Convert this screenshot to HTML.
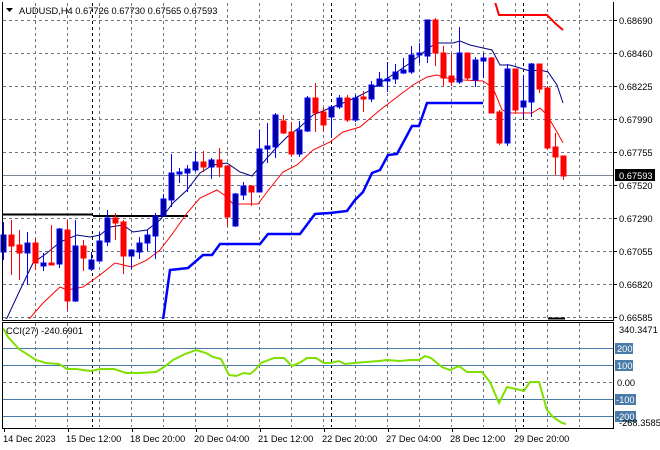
<!DOCTYPE html>
<html><head><meta charset="utf-8"><style>
html,body{margin:0;padding:0;background:#fff;}
svg{display:block;font-family:"Liberation Sans",sans-serif;}
</style></head><body>
<svg width="660" height="450" viewBox="0 0 660 450" xmlns="http://www.w3.org/2000/svg">
<defs><clipPath id="m"><rect x="3" y="3" width="610" height="316"/></clipPath>
<clipPath id="c"><rect x="3" y="323" width="610" height="104"/></clipPath></defs>
<rect width="660" height="450" fill="#fff"/>
<!-- grid main -->
<g stroke="#6b7683" stroke-width="1" stroke-dasharray="3,3" fill="none">
<path d="M3 20.5H613M3 53.5H613M3 86.5H613M3 119.5H613M3 152.5H613M3 185.5H613M3 218.5H613M3 251.5H613M3 284.5H613M3 317.5H613"/>
<path d="M35.5 3V319M67.5 3V319M99.5 3V319M131.5 3V319M163.5 3V319M195.5 3V319M227.5 3V319M259.5 3V319M291.5 3V319M323.5 3V319M355.5 3V319M387.5 3V319M419.5 3V319M451.5 3V319M483.5 3V319M515.5 3V319M547.5 3V319M579.5 3V319"/>
<path d="M35.5 323V427M67.5 323V427M99.5 323V427M131.5 323V427M163.5 323V427M195.5 323V427M227.5 323V427M259.5 323V427M291.5 323V427M323.5 323V427M355.5 323V427M387.5 323V427M419.5 323V427M451.5 323V427M483.5 323V427M515.5 323V427M547.5 323V427M579.5 323V427"/>
<path d="M3 382.5H613"/>
</g>
<g stroke="#000" stroke-dasharray="3,3"><path d="M92.5 3V319M331.5 3V319M523.5 3V319M92.5 323V427M331.5 323V427M523.5 323V427"/></g>
<!-- current price line -->
<path d="M3 175.5H613" stroke="#7a8694"/>
<g clip-path="url(#m)" fill="none">
<!-- black thick -->
<path d="M3 214.5H93M93 216H188" stroke="#000" stroke-width="2"/>
<!-- blue thick -->
<polyline stroke="#0000ff" stroke-width="2.5" points="163,320 170,270 188,268 203,255 212,255 220,244 260,244 268,234 300,234 315,214 330,213 347,211 355,200 363,192 372,173 380,170 388,155 397,154 412,126 419,126 427,103 483,103"/>
<!-- red thick top -->
<polyline stroke="#ff0000" stroke-width="2" points="495,2 499,15 547,15 556,24 563,30"/>
<!-- navy MA -->
<polyline stroke="#000080" stroke-width="1" points="5,320 7,318 20,290 33,263 47,253 60,242 77,235 90,237 100,235 110,227 123,225 133,232 147,230 160,220 173,203 187,190 200,173 213,165 227,163 240,172 252,176 267,158 277,147 287,137 300,127 313,115 330,108 343,103 357,97 367,92 380,83 397,72 410,63 420,55 430,47 437,43 453,43 460,41 470,45 483,48 492,50 500,65 510,65 520,68 530,71 540,70 548,72 557,85 563,103"/>
<!-- red MA -->
<polyline stroke="#ff0000" stroke-width="1" points="28,320 30,318 43,303 60,287 67,290 83,287 100,275 115,263 132,267 147,260 160,250 173,233 187,213 200,198 217,190 227,197 233,204 258,204 267,192 283,172 297,165 313,150 330,142 343,132 360,127 380,110 397,97 413,85 427,77 437,75 447,78 463,80 483,81 493,88 502,110 510,113 532,113 540,108 547,115 557,132 563,143"/>
</g>
<!-- candles -->
<g id="cd" stroke-width="1">
<g stroke="#0000ff" fill="#00009a">
<line x1="3.5" y1="222" x2="3.5" y2="260"/><rect x="1" y="235" width="5" height="17"/>
<line x1="27.5" y1="232" x2="27.5" y2="285"/><rect x="25" y="243" width="5" height="10"/>
<line x1="43.5" y1="253" x2="43.5" y2="271"/><rect x="41" y="263" width="5" height="3"/>
<line x1="59.5" y1="228" x2="59.5" y2="268"/><rect x="57" y="229" width="5" height="35"/>
<line x1="75.5" y1="220" x2="75.5" y2="302"/><rect x="73" y="246" width="5" height="55"/>
<line x1="91.5" y1="252" x2="91.5" y2="271"/><rect x="89" y="260" width="5" height="9"/>
<line x1="99.5" y1="232" x2="99.5" y2="261"/><rect x="97" y="241" width="5" height="20"/>
<line x1="107.5" y1="210" x2="107.5" y2="246"/><rect x="105" y="218" width="5" height="24"/>
<line x1="131.5" y1="250" x2="131.5" y2="269"/><rect x="129" y="250" width="5" height="6"/>
<line x1="139.5" y1="237" x2="139.5" y2="259"/><rect x="137" y="243" width="5" height="9"/>
<line x1="147.5" y1="229" x2="147.5" y2="251"/><rect x="145" y="235" width="5" height="8"/>
<line x1="155.5" y1="213" x2="155.5" y2="259"/><rect x="153" y="216" width="5" height="20"/>
<line x1="163.5" y1="194" x2="163.5" y2="216"/><rect x="161" y="199" width="5" height="17"/>
<line x1="171.5" y1="154" x2="171.5" y2="207"/><rect x="169" y="173" width="5" height="27"/>
<line x1="179.5" y1="168" x2="179.5" y2="183"/><rect x="177" y="172" width="5" height="2"/>
<line x1="187.5" y1="165" x2="187.5" y2="192"/><rect x="185" y="169" width="5" height="4"/>
<line x1="195.5" y1="151" x2="195.5" y2="172"/><rect x="193" y="162" width="5" height="8"/>
<line x1="211.5" y1="158" x2="211.5" y2="179"/><rect x="209" y="160" width="5" height="7"/>
<line x1="235.5" y1="193" x2="235.5" y2="227"/><rect x="233" y="194" width="5" height="32"/>
<line x1="243.5" y1="182" x2="243.5" y2="200"/><rect x="241" y="186" width="5" height="9"/>
<line x1="259.5" y1="130" x2="259.5" y2="192"/><rect x="257" y="149" width="5" height="43"/>
<line x1="267.5" y1="123" x2="267.5" y2="163"/><rect x="265" y="146" width="5" height="3"/>
<line x1="275.5" y1="113" x2="275.5" y2="158"/><rect x="273" y="115" width="5" height="32"/>
<line x1="299.5" y1="121" x2="299.5" y2="157"/><rect x="297" y="130" width="5" height="24"/>
<line x1="307.5" y1="96" x2="307.5" y2="132"/><rect x="305" y="98" width="5" height="33"/>
<line x1="331.5" y1="105" x2="331.5" y2="138"/><rect x="329" y="107" width="5" height="10"/>
<line x1="339.5" y1="95" x2="339.5" y2="109"/><rect x="337" y="98" width="5" height="9"/>
<line x1="355.5" y1="95" x2="355.5" y2="122"/><rect x="353" y="98" width="5" height="22"/>
<line x1="371.5" y1="81" x2="371.5" y2="102"/><rect x="369" y="85" width="5" height="14"/>
<line x1="379.5" y1="72" x2="379.5" y2="87"/><rect x="377" y="79" width="5" height="7"/>
<line x1="387.5" y1="62" x2="387.5" y2="92"/><rect x="385" y="79" width="5" height="2"/>
<line x1="395.5" y1="64" x2="395.5" y2="84"/><rect x="393" y="72" width="5" height="7"/>
<line x1="403.5" y1="58" x2="403.5" y2="74"/><rect x="401" y="70" width="5" height="3"/>
<line x1="411.5" y1="46" x2="411.5" y2="74"/><rect x="409" y="55" width="5" height="17"/>
<line x1="419.5" y1="43" x2="419.5" y2="63"/><rect x="417" y="53" width="5" height="2"/>
<line x1="427.5" y1="20" x2="427.5" y2="63"/><rect x="425" y="20" width="5" height="36"/>
<line x1="459.5" y1="27" x2="459.5" y2="84"/><rect x="457" y="53" width="5" height="29"/>
<line x1="475.5" y1="57" x2="475.5" y2="87"/><rect x="473" y="60" width="5" height="20"/>
<line x1="483.5" y1="53" x2="483.5" y2="78"/><rect x="481" y="58" width="5" height="3"/>
<line x1="507.5" y1="64" x2="507.5" y2="146"/><rect x="505" y="69" width="5" height="74"/>
<line x1="523.5" y1="75" x2="523.5" y2="117"/><rect x="521" y="101" width="5" height="6"/>
<line x1="531.5" y1="63" x2="531.5" y2="117"/><rect x="529" y="64" width="5" height="38"/>
</g>
<g stroke="#ff0000" fill="#ff0000">
<line x1="11.5" y1="220" x2="11.5" y2="275"/><rect x="9" y="235" width="5" height="11"/>
<line x1="19.5" y1="230" x2="19.5" y2="280"/><rect x="17" y="245" width="5" height="8"/>
<line x1="35.5" y1="238" x2="35.5" y2="270"/><rect x="33" y="243" width="5" height="20"/>
<line x1="51.5" y1="225" x2="51.5" y2="265"/><rect x="49" y="263" width="5" height="2"/>
<line x1="67.5" y1="220" x2="67.5" y2="310"/><rect x="65" y="230" width="5" height="71"/>
<line x1="83.5" y1="240" x2="83.5" y2="271"/><rect x="81" y="246" width="5" height="12"/>
<line x1="115.5" y1="213" x2="115.5" y2="240"/><rect x="113" y="218" width="5" height="5"/>
<line x1="123.5" y1="220" x2="123.5" y2="274"/><rect x="121" y="222" width="5" height="34"/>
<line x1="203.5" y1="151" x2="203.5" y2="172"/><rect x="201" y="162" width="5" height="5"/>
<line x1="219.5" y1="148" x2="219.5" y2="177"/><rect x="217" y="160" width="5" height="7"/>
<line x1="227.5" y1="166" x2="227.5" y2="226"/><rect x="225" y="166" width="5" height="51"/>
<line x1="251.5" y1="186" x2="251.5" y2="206"/><rect x="249" y="186" width="5" height="6"/>
<line x1="283.5" y1="115" x2="283.5" y2="134"/><rect x="281" y="121" width="5" height="12"/>
<line x1="291.5" y1="122" x2="291.5" y2="157"/><rect x="289" y="132" width="5" height="22"/>
<line x1="315.5" y1="83" x2="315.5" y2="132"/><rect x="313" y="98" width="5" height="15"/>
<line x1="323.5" y1="108" x2="323.5" y2="132"/><rect x="321" y="112" width="5" height="13"/>
<line x1="347.5" y1="95" x2="347.5" y2="122"/><rect x="345" y="98" width="5" height="22"/>
<line x1="363.5" y1="91" x2="363.5" y2="112"/><rect x="361" y="97" width="5" height="2"/>
<line x1="435.5" y1="18" x2="435.5" y2="66"/><rect x="433" y="20" width="5" height="33"/>
<line x1="443.5" y1="46" x2="443.5" y2="86"/><rect x="441" y="53" width="5" height="25"/>
<line x1="451.5" y1="53" x2="451.5" y2="86"/><rect x="449" y="76" width="5" height="6"/>
<line x1="467.5" y1="53" x2="467.5" y2="80"/><rect x="465" y="53" width="5" height="25"/>
<line x1="491.5" y1="57" x2="491.5" y2="113"/><rect x="489" y="58" width="5" height="55"/>
<line x1="499.5" y1="110" x2="499.5" y2="145"/><rect x="497" y="112" width="5" height="31"/>
<line x1="515.5" y1="69" x2="515.5" y2="112"/><rect x="513" y="69" width="5" height="41"/>
<line x1="539.5" y1="64" x2="539.5" y2="93"/><rect x="537" y="64" width="5" height="25"/>
<line x1="547.5" y1="86" x2="547.5" y2="150"/><rect x="545" y="88" width="5" height="60"/>
<line x1="555.5" y1="133" x2="555.5" y2="175"/><rect x="553" y="147" width="5" height="10"/>
<line x1="563.5" y1="156" x2="563.5" y2="180"/><rect x="561" y="156" width="5" height="20"/>
</g>
</g>
<path d="M548 318.5H565" stroke="#000" stroke-width="2"/>
<!-- CCI levels -->
<g stroke="#4a7aa8" stroke-width="1"><path d="M3 348.5H613M3 365.5H613M3 399.5H613M3 416.5H613"/></g>
<g clip-path="url(#c)"><polyline fill="none" stroke="#7fe000" stroke-width="2" points="3,328 8,337 19,349 36,360 46,363 59,364 67,369 76,369 90,371 101,369 114,369 126,373 139,373 156,372 164,367 173,360 185,354 196,350 206,353 213,357 221,359 229,375 236,376 244,373 250,374 255,370 261,363 274,358 284,358 292,366 301,362 307,358 316,358 324,363 330,363 339,361 345,364 354,363 366,362 379,361 387,360 400,361 410,360 419,360 425,356 431,358 442,367 450,370 459,366 467,372 482,372 490,382 499,403 507,387 516,389 524,391 530,382 539,382 547,410 553,417 562,423 566,424"/></g>
<!-- frames -->
<g stroke="#000" stroke-width="1" fill="none">
<path d="M2.5 2V320.5H613.5V2"/>
<path d="M2.5 322.5H613.5V428.5H2.5Z"/>
<path d="M4.5 429V432M68.5 429V432M132.5 429V432M196.5 429V432M260.5 429V432M324.5 429V432M388.5 429V432M452.5 429V432M516.5 429V432"/>
<path d="M614 20.5H617M614 53.5H617M614 86.5H617M614 119.5H617M614 152.5H617M614 185.5H617M614 218.5H617M614 251.5H617M614 284.5H617M614 317.5H617"/>
</g>
<!-- header -->
<path d="M6 8H13L9.5 12Z" fill="#000"/>
<text x="19" y="14" font-size="9.3" fill="#000">AUDUSD,H4  0.67726 0.67730 0.67565 0.67593</text>
<text x="6" y="334" font-size="9.3" fill="#000">CCI(27) -240.6901</text>
<!-- price axis -->
<g font-size="9.3" fill="#000">
<text x="619" y="24">0.68690</text>
<text x="619" y="57">0.68460</text>
<text x="619" y="90">0.68225</text>
<text x="619" y="123">0.67990</text>
<text x="619" y="156">0.67755</text>
<text x="619" y="189">0.67520</text>
<text x="619" y="222">0.67290</text>
<text x="619" y="255">0.67055</text>
<text x="619" y="288">0.66820</text>
<text x="619" y="321">0.66585</text>
</g>
<rect x="615" y="169" width="40" height="12" fill="#000"/>
<text x="619" y="179" font-size="9.3" fill="#fff">0.67593</text>
<!-- CCI axis -->
<g font-size="9.3">
<text x="619" y="333" fill="#000">340.3471</text>
<rect x="615" y="343" width="18" height="11" fill="#4a7aa8"/><text x="617" y="352" fill="#fff">200</text>
<rect x="615" y="360" width="18" height="11" fill="#4a7aa8"/><text x="617" y="369" fill="#fff">100</text>
<text x="617" y="386" fill="#000">0.00</text>
<rect x="615" y="394" width="21" height="11" fill="#4a7aa8"/><text x="616" y="403" fill="#fff">-100</text>
<rect x="615" y="411" width="21" height="11" fill="#4a7aa8"/><text x="616" y="420" fill="#fff">-200</text>
<text x="619" y="426" fill="#000">-268.3585</text>
</g>
<!-- time axis -->
<g font-size="9.3" fill="#000">
<text x="3" y="442">14 Dec 2023</text>
<text x="66" y="442">15 Dec 12:00</text>
<text x="130" y="442">18 Dec 20:00</text>
<text x="194" y="442">20 Dec 04:00</text>
<text x="258" y="442">21 Dec 12:00</text>
<text x="322" y="442">22 Dec 20:00</text>
<text x="386" y="442">27 Dec 04:00</text>
<text x="450" y="442">28 Dec 12:00</text>
<text x="514" y="442">29 Dec 20:00</text>
</g>
</svg>
</body></html>
